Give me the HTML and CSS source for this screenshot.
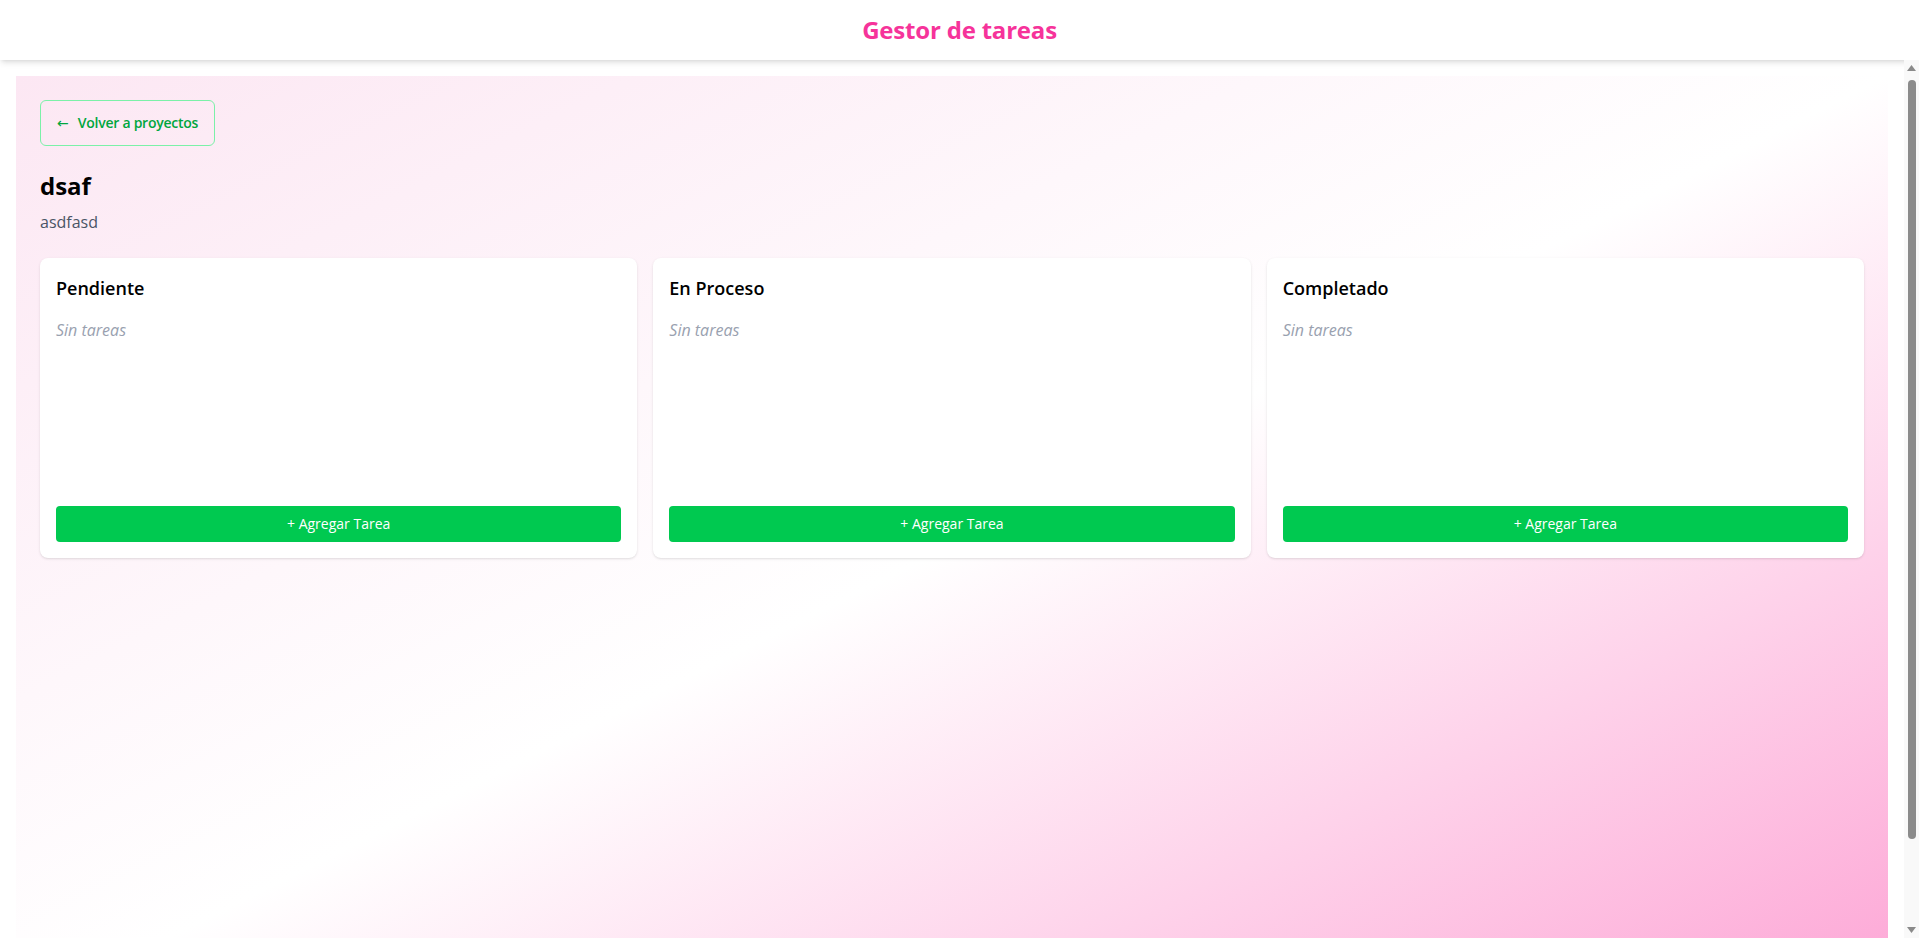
FILE: index.html
```html
<!DOCTYPE html>
<html lang="es">
<head>
<meta charset="utf-8">
<title>Gestor de tareas</title>
<link rel="stylesheet" href="styles.css">
</head>
<body>
<div class="app">
  <header class="topbar">
    <h1 class="brand">Gestor de tareas</h1>
  </header>
  <div class="viewport">
    <main class="main">
      <section class="board">
        <button class="back-btn" type="button"><span class="back-arrow">←</span><span>Volver a proyectos</span></button>
        <h2 class="project-title">dsaf</h2>
        <p class="project-desc">asdfasd</p>
        <div class="columns">
          <div class="column">
            <h3 class="column-title">Pendiente</h3>
            <div class="task-list"><p class="empty">Sin tareas</p></div>
            <button class="add-btn" type="button">+ Agregar Tarea</button>
          </div>
          <div class="column">
            <h3 class="column-title">En Proceso</h3>
            <div class="task-list"><p class="empty">Sin tareas</p></div>
            <button class="add-btn" type="button">+ Agregar Tarea</button>
          </div>
          <div class="column">
            <h3 class="column-title">Completado</h3>
            <div class="task-list"><p class="empty">Sin tareas</p></div>
            <button class="add-btn" type="button">+ Agregar Tarea</button>
          </div>
        </div>
      </section>
    </main>
    <div class="scrollbar" aria-hidden="true">
      <div class="sb-btn"><svg width="9" height="6" viewBox="0 0 9 6"><polygon points="4.5,0 9,6 0,6" fill="#8a8a8a"/></svg></div>
      <div class="sb-track"><div class="sb-thumb"></div></div>
      <div class="sb-btn"><svg width="9" height="6" viewBox="0 0 9 6"><polygon points="0,0 9,0 4.5,6" fill="#8a8a8a"/></svg></div>
    </div>
  </div>
</div>
</body>
</html>
```

FILE: styles.css
```css
* {
  box-sizing: border-box;
}

html, body {
  margin: 0;
  padding: 0;
  height: 100%;
  overflow: hidden;
}

body {
  font-family: "Open Sans", "Noto Sans", "Liberation Sans", sans-serif;
  color: #000;
  background: #fff;
}

.app {
  display: flex;
  flex-direction: column;
  height: 100vh;
}

.topbar {
  flex: 0 0 60px;
  height: 60px;
  display: flex;
  align-items: center;
  justify-content: center;
  background: #fff;
  box-shadow: 0 4px 6px -1px rgba(0, 0, 0, 0.1), 0 2px 4px -2px rgba(0, 0, 0, 0.1);
  position: relative;
  z-index: 2;
}

.brand {
  margin: 0;
  font-size: 24px;
  line-height: 32px;
  font-weight: 700;
  color: #f6339a;
  letter-spacing: -0.2px;
}

.viewport {
  flex: 1 1 auto;
  min-height: 0;
  display: flex;
}

.main {
  flex: 1 1 auto;
  min-width: 0;
  overflow: hidden;
  padding: 16px;
}

.scrollbar {
  flex: 0 0 15px;
  display: flex;
  flex-direction: column;
  background: #f9f9f9;
  position: relative;
  z-index: 3;
}

.sb-btn {
  flex: 0 0 16px;
  display: flex;
  align-items: center;
  justify-content: center;
}

.sb-track {
  flex: 1 1 auto;
  padding: 4px 3px 0 4px;
}

.sb-thumb {
  height: 759px;
  border-radius: 4px;
  background: #8b8b8b;
}

.board {
  min-height: 100vh;
  padding: 24px;
  background: linear-gradient(to bottom right, #fce7f3 0%, #ffffff 50%, #fda5d5 100%);
}

.back-btn {
  display: inline-flex;
  align-items: center;
  gap: 9px;
  height: 46px;
  padding: 0 16px;
  border: 1px solid #7bf1a8;
  border-radius: 6px;
  background: transparent;
  color: #00a63e;
  font-family: inherit;
  font-size: 14px;
  font-weight: 600;
  line-height: 20px;
  letter-spacing: -0.25px;
  cursor: pointer;
}

.back-arrow {
  font-family: "DejaVu Sans", sans-serif;
  font-size: 14px;
  font-weight: 400;
  letter-spacing: 0;
}

.project-title {
  margin: 24px 0 8px;
  font-size: 24px;
  line-height: 32px;
  font-weight: 700;
  color: #000;
}

.project-desc {
  margin: 0 0 24px;
  font-size: 16px;
  line-height: 24px;
  color: #4a5565;
}

.columns {
  display: grid;
  grid-template-columns: repeat(3, 1fr);
  gap: 16px;
}

.column {
  display: flex;
  flex-direction: column;
  min-height: 300px;
  padding: 16px;
  background: #fff;
  border-radius: 8px;
  box-shadow: 0 1px 3px 0 rgba(0, 0, 0, 0.1), 0 1px 2px -1px rgba(0, 0, 0, 0.1);
}

.column-title {
  margin: 0 0 16px;
  font-size: 18px;
  line-height: 28px;
  font-weight: 600;
}

.task-list {
  flex: 1 1 auto;
}

.empty {
  margin: 0;
  font-size: 16px;
  line-height: 24px;
  font-style: italic;
  color: #99a1af;
}

.add-btn {
  margin-top: 16px;
  height: 36px;
  width: 100%;
  border: none;
  border-radius: 4px;
  background: #00c950;
  color: #fff;
  font-family: inherit;
  font-size: 14px;
  line-height: 20px;
  cursor: pointer;
}
```
